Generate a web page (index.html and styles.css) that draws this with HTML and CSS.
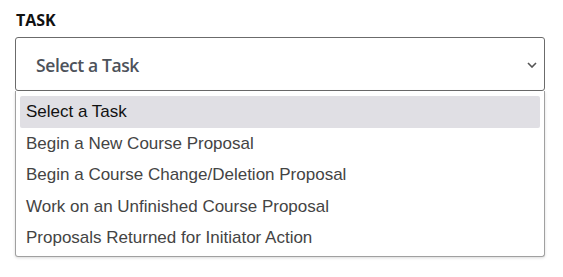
FILE: index.html
```html
<!DOCTYPE html>
<html>
<head>
<meta charset="utf-8">
<link rel="stylesheet" href="styles.css">
</head>
<body>
<div class="field">
  <div class="label">TASK</div>
  <div class="select">
    <span class="value">Select a Task</span>
    <svg class="chev" width="10" height="6" viewBox="0 0 10 6"><path d="M1 1 L5 5 L9 1" fill="none" stroke="#555" stroke-width="1.6"/></svg>
  </div>
  <ul class="menu">
    <li class="opt active">Select a Task</li>
    <li class="opt">Begin a New Course Proposal</li>
    <li class="opt">Begin a Course Change/Deletion Proposal</li>
    <li class="opt">Work on an Unfinished Course Proposal</li>
    <li class="opt">Proposals Returned for Initiator Action</li>
  </ul>
</div>
</body>
</html>
```
FILE: styles.css
```css
html, body { margin: 0; padding: 0; background: #fff; }
body { width: 563px; height: 277px; overflow: hidden; }
.field { padding: 9px 18px 0 15px; display: flex; flex-direction: column; }
.label {
  font-family: "Open Sans", sans-serif;
  font-weight: 700;
  font-size: 16px;
  line-height: 22px;
  color: #111;
  padding-left: 1px;
  margin-bottom: 6px;
}
.select {
  box-sizing: border-box;
  height: 54px;
  border: 1px solid #6b6b6b;
  border-radius: 3px;
  display: flex;
  align-items: center;
  justify-content: space-between;
  padding: 0 7px 0 20px;
}
.value {
  font-family: "Open Sans", sans-serif;
  font-size: 17.5px;
  font-weight: 600;
  letter-spacing: -0.4px;
  color: #4d525a;
  padding-top: 1px;
}
.chev { margin-top: 2px; }
.menu {
  list-style: none;
  margin: 0;
  box-sizing: border-box;
  border: 1px solid #a0a0a0;
  border-top: none;
  border-radius: 0 0 3px 3px;
  box-shadow: 0 1px 3px rgba(0,0,0,0.15);
  padding: 5px 4px 3px 4px;
  height: 166px;
}
.opt {
  font-family: "Liberation Sans", Arial, sans-serif;
  font-size: 17px;
  color: #444;
  height: 31.5px;
  line-height: 31.5px;
  padding-left: 6px;
  border-radius: 2px;
}
.opt.active { background: #e0dfe4; color: #111; }
```
